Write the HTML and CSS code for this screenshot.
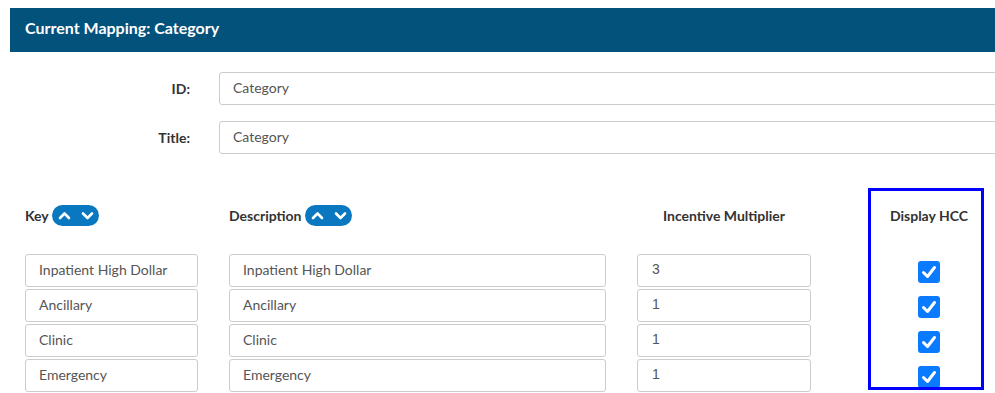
FILE: index.html
```html
<!DOCTYPE html>
<html>
<head>
<meta charset="utf-8">
<link rel="stylesheet" href="styles.css">
</head>
<body>
<div class="page">
  <div class="panel-head">Current Mapping: Category</div>
  <div class="form">
    <div class="form-row">
      <label class="form-label">ID:</label>
      <div class="field wide">Category</div>
    </div>
    <div class="form-row">
      <label class="form-label">Title:</label>
      <div class="field wide">Category</div>
    </div>
  </div>
  <div class="grid">
    <div class="col col-key">
      <div class="col-head">Key <span class="sorter"><svg width="47" height="21" viewBox="0 0 47 21"><rect width="47" height="21" rx="10.5" fill="#0a78c0"/><path d="M8 13 L12.5 8.5 L17 13" stroke="#fff" stroke-width="2.6" fill="none" stroke-linecap="round" stroke-linejoin="round"/><path d="M31 8.5 L35.5 13 L40 8.5" stroke="#fff" stroke-width="2.6" fill="none" stroke-linecap="round" stroke-linejoin="round"/></svg></span></div>
      <div class="field">Inpatient High Dollar</div>
      <div class="field">Ancillary</div>
      <div class="field">Clinic</div>
      <div class="field">Emergency</div>
    </div>
    <div class="col col-desc">
      <div class="col-head">Description <span class="sorter"><svg width="47" height="21" viewBox="0 0 47 21"><rect width="47" height="21" rx="10.5" fill="#0a78c0"/><path d="M8 13 L12.5 8.5 L17 13" stroke="#fff" stroke-width="2.6" fill="none" stroke-linecap="round" stroke-linejoin="round"/><path d="M31 8.5 L35.5 13 L40 8.5" stroke="#fff" stroke-width="2.6" fill="none" stroke-linecap="round" stroke-linejoin="round"/></svg></span></div>
      <div class="field">Inpatient High Dollar</div>
      <div class="field">Ancillary</div>
      <div class="field">Clinic</div>
      <div class="field">Emergency</div>
    </div>
    <div class="col col-mult">
      <div class="col-head center">Incentive Multiplier</div>
      <div class="field num">3</div>
      <div class="field num">1</div>
      <div class="field num">1</div>
      <div class="field num">1</div>
    </div>
    <div class="col col-hcc">
      <div class="col-head center hcc-head">Display HCC</div>
      <div class="check-cell"><span class="check"><svg width="22" height="22" viewBox="0 0 22 22"><path d="M5.5 11.5 L9.5 15.5 L16.5 6.5" stroke="#fff" stroke-width="3" fill="none" stroke-linecap="round" stroke-linejoin="round"/></svg></span></div>
      <div class="check-cell"><span class="check"><svg width="22" height="22" viewBox="0 0 22 22"><path d="M5.5 11.5 L9.5 15.5 L16.5 6.5" stroke="#fff" stroke-width="3" fill="none" stroke-linecap="round" stroke-linejoin="round"/></svg></span></div>
      <div class="check-cell"><span class="check"><svg width="22" height="22" viewBox="0 0 22 22"><path d="M5.5 11.5 L9.5 15.5 L16.5 6.5" stroke="#fff" stroke-width="3" fill="none" stroke-linecap="round" stroke-linejoin="round"/></svg></span></div>
      <div class="check-cell"><span class="check"><svg width="22" height="22" viewBox="0 0 22 22"><path d="M5.5 11.5 L9.5 15.5 L16.5 6.5" stroke="#fff" stroke-width="3" fill="none" stroke-linecap="round" stroke-linejoin="round"/></svg></span></div>
    </div>
  </div>
</div>
</body>
</html>
```

FILE: styles.css
```css
html, body {
  margin: 0;
  padding: 0;
  background: #fff;
  overflow: hidden;
}
body {
  font-family: Lato, "Open Sans", sans-serif;
  color: #333;
}
.page {
  padding: 8px 0 0 10px;
  width: 1100px;
}
.panel-head {
  height: 44px;
  background: #03527b;
  color: #fff;
  font-weight: 700;
  font-size: 16px;
  line-height: 40px;
  padding-left: 15px;
}
.form {
  padding-top: 20px;
  display: flex;
  flex-direction: column;
  gap: 16px;
}
.form-row {
  display: flex;
  align-items: center;
}
.form-label {
  width: 180px;
  text-align: right;
  font-weight: 700;
  font-size: 14px;
  color: #333;
  margin-right: 29px;
}
.field {
  box-sizing: border-box;
  height: 33px;
  border: 1px solid #ccc;
  border-radius: 3px;
  padding-left: 13px;
  font-size: 14px;
  line-height: 29px;
  color: #555;
  margin-bottom: 2px;
  white-space: nowrap;
}
.field.wide {
  width: 800px;
  margin-bottom: 0;
}
.field.num {
  font-family: "Liberation Sans", Arial, sans-serif;
  padding-left: 14px;
}
.grid {
  display: flex;
  margin-top: 34px;
  padding-left: 15px;
  align-items: flex-start;
}
.col {
  display: flex;
  flex-direction: column;
}
.col-key { width: 173px; margin-right: 31px; }
.col-desc { width: 377px; margin-right: 31px; }
.col-mult { width: 174px; margin-right: 57px; }
.col-hcc {
  width: 116px;
  height: 202px;
  box-sizing: border-box;
  border: 3px solid #0000ff;
  padding-left: 6px;
  overflow: hidden;
}
.col-head {
  height: 66px;
  box-sizing: border-box;
  padding-top: 17px;
  display: flex;
  align-items: flex-start;
  font-weight: 700;
  font-size: 14px;
  line-height: 21px;
  color: #333;
}
.col-head.center {
  justify-content: center;
}
.hcc-head {
  height: 63px;
  flex: none;
  padding-top: 14px;
}
.sorter {
  display: inline-flex;
  margin-left: 3px;
}
.check-cell {
  height: 35px;
  flex: none;
  display: flex;
  align-items: center;
  justify-content: center;
}
.check {
  width: 22px;
  height: 22px;
  border-radius: 3px;
  background: #0a7aff;
  display: flex;
}
```
